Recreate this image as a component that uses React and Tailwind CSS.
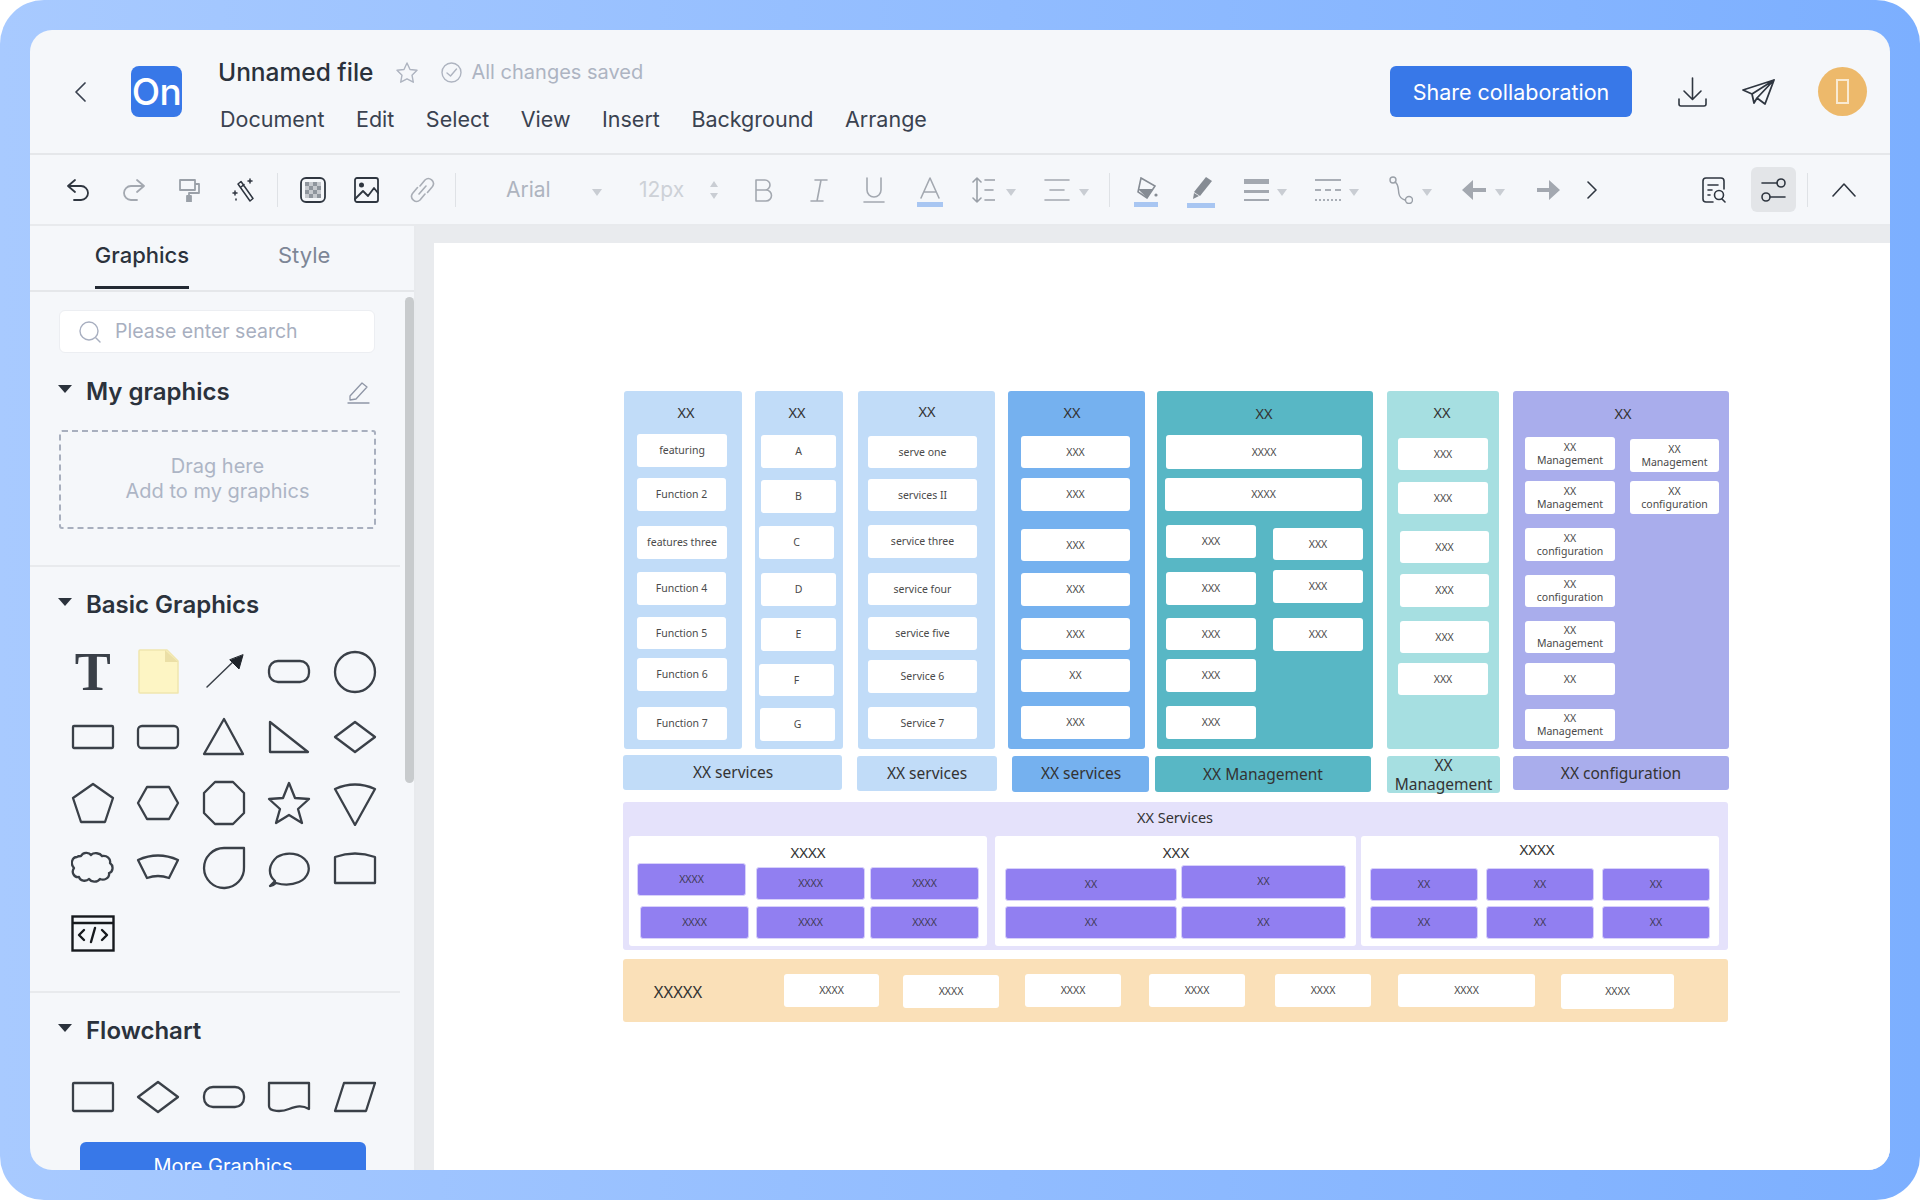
import React from 'react';

const OX = 434;
const OY = 243;
const D = 'text-[#333333]';

// page coordinates of the diagram: [left, right, top, bottom]
const panels = [
  [624, 742, 391, 749, 'bg-[#c1dcf8]'], [755, 843, 391, 749, 'bg-[#c1dcf8]'], [858, 995, 391, 749, 'bg-[#c1dcf8]'],
  [1008, 1145, 391, 749, 'bg-[#75b1ef]'], [1157, 1373, 391, 749, 'bg-[#58b7c5]'], [1387, 1499, 391, 749, 'bg-[#a6dfe1]'],
  [1513, 1729, 391, 749, 'bg-[#a9adec]'],
  [623, 842, 755, 790, 'bg-[#c1dcf8]'], [857, 997, 756, 791, 'bg-[#c1dcf8]'], [1012, 1149, 756, 792, 'bg-[#75b1ef]'],
  [1155, 1371, 756, 792, 'bg-[#58b7c5]'], [1387, 1500, 756, 793, 'bg-[#a6dfe1]'], [1513, 1729, 756, 790, 'bg-[#a9adec]'],
  [623, 1728, 802, 950, 'bg-[#e5e2fb]'], [629, 987, 836, 946, 'bg-white'], [995, 1356, 836, 946, 'bg-white'],
  [1361, 1719, 836, 946, 'bg-white'], [623, 1728, 959, 1022, 'bg-[#fae0b8]'],
];

// [center x, center y, text, size class]
const titles = [
  [686, 413, 'XX'], [797, 413, 'XX'], [927, 412, 'XX'], [1072, 413, 'XX'], [1264, 414, 'XX'], [1442, 413, 'XX'], [1623, 414, 'XX'],
  [733, 773, 'XX services', 'big'], [927, 774, 'XX services', 'big'], [1081, 774, 'XX services', 'big'],
  [1263, 775, 'XX Management', 'big'], [1621, 774, 'XX configuration', 'big'],
  [1175, 818, 'XX Services', 'mid'], [808, 852, 'XXXX', 'head'], [1176, 852, 'XXX', 'head'], [1537, 849, 'XXXX', 'head'],
  [678, 992, 'XXXXX', 'xl'],
];

// [left, right, top, bottom, label]
const nodes = [
  [637, 727, 434, 467, 'featuring'], [637, 726, 478, 511, 'Function 2'], [637, 727, 526, 559, 'features three'],
  [637, 726, 572, 605, 'Function 4'], [637, 726, 617, 649, 'Function 5'], [637, 727, 658, 691, 'Function 6'], [637, 727, 707, 740, 'Function 7'],
  [761, 836, 435, 468, 'A'], [761, 836, 480, 513, 'B'], [759, 834, 526, 559, 'C'], [761, 836, 573, 606, 'D'],
  [761, 836, 618, 651, 'E'], [759, 834, 664, 696, 'F'], [760, 835, 708, 741, 'G'],
  [868, 977, 436, 468, 'serve one'], [868, 977, 479, 511, 'services II'], [868, 977, 525, 558, 'service three'],
  [868, 977, 573, 605, 'service four'], [868, 977, 617, 650, 'service five'], [868, 977, 660, 693, 'Service 6'], [868, 977, 707, 739, 'Service 7'],
  [1021, 1130, 436, 468, 'XXX'], [1021, 1130, 478, 511, 'XXX'], [1021, 1130, 529, 561, 'XXX'], [1021, 1130, 573, 606, 'XXX'],
  [1021, 1130, 618, 650, 'XXX'], [1021, 1130, 659, 692, 'XX'], [1021, 1130, 706, 739, 'XXX'],
  [1166, 1362, 435, 469, 'XXXX'], [1165, 1362, 478, 511, 'XXXX'],
  [1166, 1256, 525, 558, 'XXX'], [1166, 1256, 572, 605, 'XXX'], [1166, 1256, 618, 650, 'XXX'], [1166, 1256, 659, 692, 'XXX'], [1166, 1256, 706, 739, 'XXX'],
  [1273, 1363, 528, 560, 'XXX'], [1273, 1363, 570, 603, 'XXX'], [1273, 1363, 618, 651, 'XXX'],
  [1398, 1488, 438, 470, 'XXX'], [1398, 1488, 482, 514, 'XXX'], [1400, 1489, 531, 563, 'XXX'], [1400, 1489, 574, 607, 'XXX'],
  [1400, 1489, 621, 653, 'XXX'], [1398, 1488, 663, 695, 'XXX'],
  [1525, 1615, 437, 470, 'XX Management'], [1525, 1615, 481, 514, 'XX Management'], [1525, 1615, 528, 561, 'XX configuration'],
  [1525, 1615, 575, 607, 'XX configuration'], [1525, 1615, 621, 653, 'XX Management'], [1525, 1615, 663, 695, 'XX'], [1525, 1615, 709, 741, 'XX Management'],
  [1630, 1719, 439, 472, 'XX Management'], [1630, 1719, 481, 514, 'XX configuration'],
  [784, 879, 974, 1007, 'XXXX'], [903, 999, 975, 1008, 'XXXX'], [1025, 1121, 974, 1007, 'XXXX'], [1149, 1245, 974, 1007, 'XXXX'],
  [1275, 1371, 974, 1007, 'XXXX'], [1398, 1535, 974, 1007, 'XXXX'], [1561, 1674, 974, 1009, 'XXXX'],
];

const purple = [
  [637, 746, 863, 896, 'XXXX'], [756, 865, 867, 900, 'XXXX'], [870, 979, 867, 900, 'XXXX'],
  [640, 749, 906, 939, 'XXXX'], [756, 865, 906, 939, 'XXXX'], [870, 979, 906, 939, 'XXXX'],
  [1005, 1177, 868, 901, 'XX'], [1181, 1346, 865, 899, 'XX'], [1005, 1177, 906, 939, 'XX'], [1181, 1346, 906, 939, 'XX'],
  [1370, 1478, 868, 901, 'XX'], [1486, 1594, 868, 901, 'XX'], [1602, 1710, 868, 901, 'XX'],
  [1370, 1478, 906, 939, 'XX'], [1486, 1594, 906, 939, 'XX'], [1602, 1710, 906, 939, 'XX'],
];

function place([l, r, t, b]) {
  return { left: l - OX, top: t - OY, width: r - l, height: b - t };
}

function Diagram() {
  return (
    <div className="font-['Noto_Sans',sans-serif]">
      {panels.map((p, i) => (
        <div key={i} className={`absolute rounded-[3px] ${p[4]}`} style={place(p)} />
      ))}
      {titles.map(([x, y, text, kind], i) => (
        <div
          key={i}
          className={`absolute -translate-x-1/2 -translate-y-1/2 whitespace-nowrap ${D} ${
            kind === 'big' ? 'text-[15.5px]' : kind === 'mid' ? 'text-[14.5px]' : kind === 'head' ? 'text-[15px]' : kind === 'xl' ? 'text-[16.5px]' : 'text-[14.5px]'
          }`}
          style={{ left: x - OX, top: y - OY }}
        >
          {text}
        </div>
      ))}
      <div
        className={`absolute flex items-center justify-center text-center text-[15.5px] leading-[19px] ${D}`}
        style={place([1387, 1500, 756, 793])}
      >
        XX<br />Management
      </div>
      {nodes.map((n, i) => (
        <div
          key={i}
          className="absolute flex items-center justify-center rounded-[3px] bg-white px-[2px] text-center text-[10.5px] leading-[13px] text-[#4a4a4a]"
          style={place(n)}
        >
          {n[4].startsWith('XX ') ? (
            <span>
              XX<br />{n[4].slice(3)}
            </span>
          ) : (
            n[4]
          )}
        </div>
      ))}
      {purple.map((n, i) => (
        <div
          key={i}
          className="absolute flex items-center justify-center rounded-[3px] border border-[#d8d1fa] bg-[#917ff1] text-[10.5px] text-[#3f3a55]"
          style={place(n)}
        >
          {n[4]}
        </div>
      ))}
    </div>
  );
}

function Svg({ w, h = 24, vb, className = '', sw = 1.6, children }) {
  return (
    <svg
      width={w}
      height={h}
      viewBox={vb || `0 0 ${w} ${h}`}
      fill="none"
      stroke="currentColor"
      strokeWidth={sw}
      strokeLinecap="round"
      strokeLinejoin="round"
      className={`shrink-0 ${className}`}
    >
      {children}
    </svg>
  );
}

function Caret({ className = '' }) {
  return (
    <svg width="10" height="7" viewBox="0 0 10 7" className={`mt-[6px] shrink-0 ${className}`}>
      <path d="M0 0h10L5 7z" fill="#c9cdd3" />
    </svg>
  );
}

function Sep({ className = '' }) {
  return <div className={`h-[34px] w-[1px] shrink-0 bg-[#dfe2e6] ${className}`} />;
}

function ColorBar({ children, className = '', w }) {
  return (
    <div className={`relative flex shrink-0 justify-center ${className}`} style={{ width: w }}>
      {children}
      <div className="absolute bottom-[-6px] left-0 h-[5px] w-full bg-[#a8c6f2]" />
    </div>
  );
}

function Toolbar() {
  return (
    <div className="flex h-[71px] shrink-0 items-center border-b-2 border-[#e8eaed] pl-[36px]">
      <Svg w={24} className="text-[#2f3640]" sw={1.8}>
        <path d="M9 2 2 8l7 6M2 8h13a7 7 0 0 1 0 14H8" />
      </Svg>
      <Svg w={24} className="ml-[32px] text-[#a3a8b0]" sw={1.8}>
        <path d="M15 2l7 6-7 6M22 8H9a7 7 0 0 0 0 14h6" />
      </Svg>
      <Svg w={24} className="ml-[31px] text-[#9aa0a8]" sw={1.8}>
        <path d="M3 2h15v10H3zM18 6h4v9H12v3" />
        <rect x="10" y="18" width="4" height="6" fill="currentColor" />
      </Svg>
      <Svg w={24} className="ml-[31px] text-[#2f3640]" sw={1.5}>
        <path d="M6 6l12 17 3-2.500L9 3.500zM9 9l3-2.500M18 1v4M16 3h4M3 13v4M1 15h4M4 21v1" />
      </Svg>
      <Sep className="ml-[21px]" />
      <svg width="26" height="26" viewBox="0 0 26 26" className="ml-[22px] shrink-0">
        <rect x="1" y="1" width="24" height="24" rx="5" fill="none" stroke="#2f3640" strokeWidth="1.8" />
        <path d="M5 5h4v4H5zM13 5h4v4h-4zM9 9h4v4H9zM17 9h4v4h-4zM5 13h4v4H5zM13 13h4v4h-4zM9 17h4v4H9zM17 17h4v4h-4z" fill="#8f959d" />
        <path d="M9 5h4v4H9zM17 5h4v4h-4zM5 9h4v4H5zM13 9h4v4h-4zM9 13h4v4H9zM17 13h4v4h-4zM5 17h4v4H5zM13 17h4v4h-4z" fill="#c6c9ce" />
      </svg>
      <Svg w={25} h={26} className="ml-[28px] text-[#2f3640]" sw={1.8}>
        <rect x="1" y="1" width="23" height="24" rx="2" />
        <circle cx="7.500" cy="8" r="1.600" fill="currentColor" />
        <path d="M1 22l8-8 5 5 6-8 4 5" />
      </Svg>
      <Svg w={25} h={26} className="ml-[31px] text-[#a9aeb6]" sw={1.6}>
        <path d="M10 9l5-6a5 5 0 0 1 7.500 6.500l-5 6M15 17l-5 6a5 5 0 0 1-7.500-6.500l5-6M9 17l7-8" />
      </Svg>
      <Sep className="ml-[20px]" />
      <span className="ml-[50px] w-[45px] shrink-0 text-[21px] text-[#aeb4bf]">Arial</span>
      <Caret className="ml-[41px]" />
      <span className="ml-[37px] w-[48px] shrink-0 text-[21px] text-[#cdd1d7]">12px</span>
      <svg width="10" height="20" viewBox="0 0 10 20" className="ml-[22px] shrink-0">
        <path d="M5 1l4 6H1zM5 19l4-6H1z" fill="#c9cdd3" />
      </svg>
      <span className="ml-[35px] w-[19px] shrink-0">
        <Svg w={19} h={24} className="text-[#a3a8b0]">
          <path d="M2 2h9a5 5 0 0 1 0 10H2zM2 12h10a5.500 5.500 0 0 1 0 11H2z" />
        </Svg>
      </span>
      <Svg w={18} h={24} className="ml-[37px] text-[#a3a8b0]">
        <path d="M5 2h12M1 23h12M11 2L7 23" />
      </Svg>
      <Svg w={22} h={26} className="ml-[35px] text-[#a3a8b0]">
        <path d="M4 1v12a7 7 0 0 0 14 0V1M1 25h20" />
      </Svg>
      <ColorBar w={26} className="ml-[32px]">
        <Svg w={20} h={22} className="-translate-y-[2px] text-[#a3a8b0]">
          <path d="M1 21 10 1l9 20M4 15h12" />
        </Svg>
      </ColorBar>
      <Svg w={23} h={26} className="ml-[29px] text-[#9aa0a8]">
        <path d="M5 1v24M1 5l4-4 4 4M1 21l4 4 4-4M13 3h10M13 13h8M13 23h10" />
      </Svg>
      <Caret className="ml-[11px]" />
      <Svg w={26} h={24} className="ml-[28px] text-[#a3a8b0]">
        <path d="M1 2h24M6 12h14M1 22h24" />
      </Svg>
      <Caret className="ml-[9px]" />
      <Sep className="ml-[20px]" />
      <ColorBar w={24} className="ml-[24px]">
        <svg width="24" height="22" viewBox="0 0 24 22" className="-translate-y-[2px] shrink-0">
          <path d="M7 1l14 8-8 12-9-6z" fill="none" stroke="#868c94" strokeWidth="1.600" />
          <path d="M4 12h15l-6 9z" fill="#868c94" />
          <circle cx="22" cy="18" r="1.600" fill="#868c94" />
        </svg>
      </ColorBar>
      <ColorBar w={28} className="ml-[29px]">
        <svg width="24" height="24" viewBox="0 0 24 24" className="-translate-y-[2px] shrink-0">
          <path d="M17 1l6 4-12 15-6-4z" fill="#868c94" />
          <path d="M5 17l5 3-6 3z" fill="#868c94" />
        </svg>
      </ColorBar>
      <div className="ml-[29px] flex w-[25px] shrink-0 flex-col">
        <div className="h-[5px] bg-[#a3a8b0]" />
        <div className="mt-[6px] h-[3px] bg-[#a3a8b0]" />
        <div className="mt-[6px] h-[2px] bg-[#a3a8b0]" />
      </div>
      <Caret className="ml-[8px]" />
      <div className="ml-[28px] flex w-[26px] shrink-0 flex-col">
        <div className="h-[2px] bg-[#a9aeb6]" />
        <div className="mt-[8px] h-0 border-t-2 border-dashed border-[#a9aeb6]" />
        <div className="mt-[8px] h-0 border-t-2 border-dotted border-[#a9aeb6]" />
      </div>
      <Caret className="ml-[8px]" />
      <Svg w={24} h={28} className="ml-[30px] text-[#9aa0a8]" sw={1.4}>
        <circle cx="4" cy="4" r="3" />
        <circle cx="20" cy="24" r="3.500" />
        <path d="M6 6c4 2 3 8 4 12 .5 3 3 5 6 6" />
      </Svg>
      <Caret className="ml-[9px]" />
      <svg width="24" height="20" viewBox="0 0 24 20" className="ml-[30px] shrink-0">
        <path d="M11 0v8h13v4H11v8L0 10z" fill="#a3a8b0" />
      </svg>
      <Caret className="ml-[9px]" />
      <svg width="23" height="20" viewBox="0 0 23 20" className="ml-[32px] shrink-0">
        <path d="M12 0v8H0v4h12v8l11-10z" fill="#a3a8b0" />
      </svg>
      <Svg w={10} h={18} className="ml-[27px] text-[#2f3640]">
        <path d="M1 1l8 8-8 8" />
      </Svg>
      <Svg w={25} h={26} className="ml-[105px] text-[#2f3640]">
        <path d="M11 25H4a3 3 0 0 1-3-3V4a3 3 0 0 1 3-3h15a3 3 0 0 1 3 3v8M6 8h10M6 13h4M6 18h2" />
        <circle cx="17" cy="18" r="4.500" />
        <path d="M20 22l3 3" />
      </Svg>
      <div className="ml-[24px] flex h-[45px] w-[45px] shrink-0 items-center justify-center rounded-[6px] bg-[#e3e5e8]">
        <Svg w={25} h={26} className="text-[#2f3640]">
          <path d="M1 6h15M9 20h15" />
          <circle cx="20" cy="6" r="4" />
          <circle cx="5" cy="20" r="4" />
        </Svg>
      </div>
      <Sep className="ml-[11px]" />
      <Svg w={24} h={14} className="ml-[24px] text-[#2f3640]">
        <path d="M1 13 12 1l11 12" />
      </Svg>
    </div>
  );
}

function Header() {
  return (
    <div className="flex h-[125px] shrink-0 items-center border-b-2 border-[#e5e7ea] pr-[23px] pl-[44px]">
      <Svg w={12} h={20} className="text-[#3a4250]" sw={1.7}>
        <path d="M11 1 2 10l9 9" />
      </Svg>
      <div className="ml-[45px] flex h-[51px] w-[51px] shrink-0 items-center justify-center rounded-[8px] bg-[#3878e8] text-[37px] font-medium tracking-[-0.5px] text-white">
        On
      </div>
      <div className="ml-[36px] flex flex-col self-start pt-[28px]">
        <div className="flex h-[28px] items-center">
          <span className="text-[24.5px] font-medium text-[#2b323c]">Unnamed file</span>
          <Svg w={22} h={21} className="ml-[23px] text-[#aeb4c0]" sw={1.4}>
            <path d="M11 1l3 6.500 7 .8-5 4.900 1.300 7L11 16.800 4.700 20.200l1.300-7-5-4.900 7-.8z" />
          </Svg>
          <Svg w={21} h={21} className="ml-[23px] text-[#aeb4c0]" sw={1.4}>
            <circle cx="10.500" cy="10.500" r="9.500" />
            <path d="M6 11l3.500 3 6-7" />
          </Svg>
          <span className="ml-[9px] text-[20px] text-[#adb4c2]">All changes saved</span>
        </div>
        <div className="mt-[20px] ml-[2px] flex h-[27px] items-center gap-[31.500px] text-[21.500px] text-[#3a4250]">
          <span>Document</span>
          <span>Edit</span>
          <span>Select</span>
          <span>View</span>
          <span>Insert</span>
          <span>Background</span>
          <span>Arrange</span>
        </div>
      </div>
      <button className="ml-auto flex h-[51px] w-[242px] shrink-0 items-center justify-center rounded-[6px] bg-[#3878e8] pt-[2px] text-[21.5px] text-white">
        Share collaboration
      </button>
      <Svg w={29} h={30} className="ml-[46px] text-[#2f3640]">
        <path d="M14.500 1v21M6 14l8.500 8.500L23 14M1 22v5a2 2 0 0 0 2 2h23a2 2 0 0 0 2-2v-5" />
      </Svg>
      <Svg w={33} h={26} className="ml-[35px] text-[#2f3640]" sw={1.8}>
        <path d="M32 1 1 11l9 4zM32 1 23 25l-8-6zM32 1 10 15l2 9 3-5" />
      </Svg>
      <div className="ml-[43px] flex h-[49px] w-[49px] shrink-0 items-center justify-center rounded-full bg-[#edb96b]">
        <div className="h-[25px] w-[13px] border-2 border-[#f9ead2]" />
      </div>
    </div>
  );
}

const shape = { fill: 'none', stroke: '#3a4048', strokeWidth: 2.3, strokeLinejoin: 'round', strokeLinecap: 'round' };

function S({ children }) {
  return (
    <div className="flex h-[65.5px] w-[65.5px] items-center justify-center">
      <svg width="44" height="46" viewBox="0 0 44 46" {...shape}>
        {children}
      </svg>
    </div>
  );
}

function BasicGrid() {
  return (
    <div className="ml-[30px] grid w-[328px] grid-cols-[repeat(5,65.5px)]">
      <div className="flex h-[65.5px] w-[65.5px] items-center justify-center font-['Liberation_Serif',serif] text-[54px] leading-none font-bold text-[#3a4048]">T</div>
      <S>
        <path d="M4 1h27l11 11v32H4a1 1 0 0 1-1-1V2a1 1 0 0 1 1-1z" fill="#fdf5c4" stroke="#f0e6ae" strokeWidth="1.500" />
        <path d="M29 1l13 12H29z" fill="#ebdfa6" stroke="none" />
      </S>
      <S>
        <path d="M5 38 33 11" strokeWidth="1.500" />
        <path d="M41 6 37 20 28 11z" fill="#20252b" stroke="#20252b" strokeWidth="1" />
      </S>
      <S><rect x="2" y="12" width="40" height="21" rx="9" /></S>
      <S><ellipse cx="22" cy="23" rx="20" ry="20" /></S>
      <S><rect x="2" y="12" width="40" height="22" rx="1" /></S>
      <S><rect x="2" y="12" width="40" height="22" rx="4" /></S>
      <S><path d="M22 5 41 40H2z" /></S>
      <S><path d="M3 8 41 38H3z" /></S>
      <S><path d="M22 8 42 23 22 38 2 23z" /></S>
      <S><path d="M22 4 42 18 34 42H10L2 18z" /></S>
      <S><path d="M11 7h22l9 16-9 16H11L2 23z" /></S>
      <S><path d="M13 2h18l11 11v20L31 44H13L2 33V13z" /></S>
      <S><path d="M22 3l6 15 14 1-11 10 4 14-13-8-13 8 4-14L2 19l14-1z" /></S>
      <S><path d="M2 8Q22-1 42 8L22 44z" transform="translate(0 1)" /></S>
      <S>
        <path d="M10 11c2-4 8-4 10-1 3-3 9-2 11 1 5-1 9 3 8 7 4 3 3 9-1 10 1 5-5 8-9 6-3 4-9 3-11 0-3 3-9 2-10-2-5 1-8-5-5-9-4-4-2-11 3-11 1-1 3-1 4-1z" />
      </S>
      <S><path d="M2 15Q22 6 42 15L33 33Q22 29 11 33z" /></S>
      <S><path d="M42 3v19a20 20 0 1 1-20-19z" /></S>
      <S><path d="M3 41l5-5C0 29 2 19 10 12c10-6 24-4 30 5 4 7 1 16-8 20-7 3-16 3-23 1-2 2-4 3-6 3z" /></S>
      <S><path d="M2 38V12Q22 5 42 12v26z" /></S>
      <div className="flex h-[65.5px] w-[65.5px] items-center justify-center">
        <svg width="44" height="37" viewBox="0 0 44 37" fill="none" stroke="#16191d" strokeWidth="2.400">
          <rect x="1.500" y="1.500" width="41" height="34" />
          <path d="M2 8h40" />
          <path d="M13 15l-5 5 5 5M31 15l5 5-5 5M24 13l-4 14" strokeLinecap="round" strokeLinejoin="round" />
        </svg>
      </div>
    </div>
  );
}

function FlowRow() {
  return (
    <div className="ml-[30px] grid w-[328px] grid-cols-[repeat(5,65.5px)]">
      <S><rect x="2" y="9" width="40" height="28" rx="1" /></S>
      <S><path d="M22 8 42 23 22 38 2 23z" /></S>
      <S><rect x="2" y="13" width="40" height="20" rx="9" /></S>
      <S><path d="M2 9h40v26c-7-4-12-3-20 0-7 3-20 3-20-3z" /></S>
      <S><path d="M11 9h31l-9 28H2z" /></S>
    </div>
  );
}

function SectionHead({ children, right }) {
  return (
    <div className="ml-[28px] flex h-[28px] items-center">
      <svg width="14" height="8" viewBox="0 0 14 8" className="-mt-[6px] shrink-0">
        <path d="M0 0h14L7 8z" fill="#2b323c" />
      </svg>
      <span className="ml-[14px] text-[24px] font-semibold text-[#2b323c]">{children}</span>
      {right}
    </div>
  );
}

function Sidebar() {
  return (
    <aside className="relative flex w-[386px] shrink-0 flex-col overflow-hidden border-r-2 border-[#e8eaed]">
      <div className="relative flex h-[66px] shrink-0 items-start border-b-2 border-[#e5e7ea]">
        <div className="ml-[65px] flex h-[63px] w-[94px] items-center justify-center border-b-[3px] border-[#232a33] pb-[2px] text-[22px] font-medium text-[#2b323c]">
          Graphics
        </div>
        <div className="ml-[89px] flex h-[58px] items-center text-[22px] text-[#7d8696]">Style</div>
      </div>
      <div className="absolute top-[71px] left-[375px] h-[486px] w-[9px] rounded-full bg-[#c8cbcd]" />
      <div className="mt-[18px] ml-[29px] flex h-[43px] w-[316px] shrink-0 items-center rounded-[6px] border border-[#eceef2] bg-white pl-[19px] text-[19.500px] text-[#a8afc0]">
        <Svg w={22} h={22} className="text-[#a8afc0]" sw={1.4}>
          <circle cx="10" cy="10" r="9" />
          <path d="M17 17l4 4" />
        </Svg>
        <span className="ml-[14px]">Please enter search</span>
      </div>
      <div className="mt-[25px]">
        <SectionHead
          right={
            <Svg w={23} h={24} className="ml-auto mr-[44px] text-[#8f96a6]" sw={1.3}>
              <path d="M3 16 15 3l5 4L9 19l-6 1zM1 23h21" />
            </Svg>
          }
        >
          My graphics
        </SectionHead>
      </div>
      <div className="mt-[24px] ml-[29px] flex h-[99px] w-[317px] shrink-0 flex-col items-center justify-center rounded-[3px] border-2 border-dashed border-[#a8afbe] pb-[2px] text-[20px] leading-[25px] text-[#adb5c5]">
        <span>Drag here</span>
        <span>Add to my graphics</span>
      </div>
      <div className="mt-[36px] h-[2px] w-[370px] shrink-0 bg-[#e8eaed]" />
      <div className="mt-[24px]">
        <SectionHead>Basic Graphics</SectionHead>
      </div>
      <div className="mt-[20px]">
        <BasicGrid />
      </div>
      <div className="mt-[24px] h-[2px] w-[370px] shrink-0 bg-[#e8eaed]" />
      <div className="mt-[24px]">
        <SectionHead>Flowchart</SectionHead>
      </div>
      <div className="mt-[20px]">
        <FlowRow />
      </div>
      <button className="mt-[12px] ml-[50px] flex h-[50px] w-[286px] shrink-0 items-start justify-center rounded-[6px] bg-[#3878e8] pt-[9px] text-[20px] text-white">
        More Graphics
      </button>
    </aside>
  );
}

export default function App() {
  return (
    <div className="h-[1200px] w-[1920px] rounded-[44px] bg-linear-to-r from-[#a8caff] to-[#7cafff] p-[30px] font-['Inter',sans-serif]">
      <div className="flex h-[1140px] w-[1860px] flex-col overflow-hidden rounded-[22px] bg-[#f5f7fa]">
        <Header />
        <Toolbar />
        <div className="flex min-h-0 flex-1">
          <Sidebar />
          <div className="flex min-w-0 flex-1 flex-col bg-[#e9ebee] pt-[17px] pl-[18px]">
            <div className="relative flex-1 bg-white">
              <Diagram />
            </div>
          </div>
        </div>
      </div>
    </div>
  );
}
